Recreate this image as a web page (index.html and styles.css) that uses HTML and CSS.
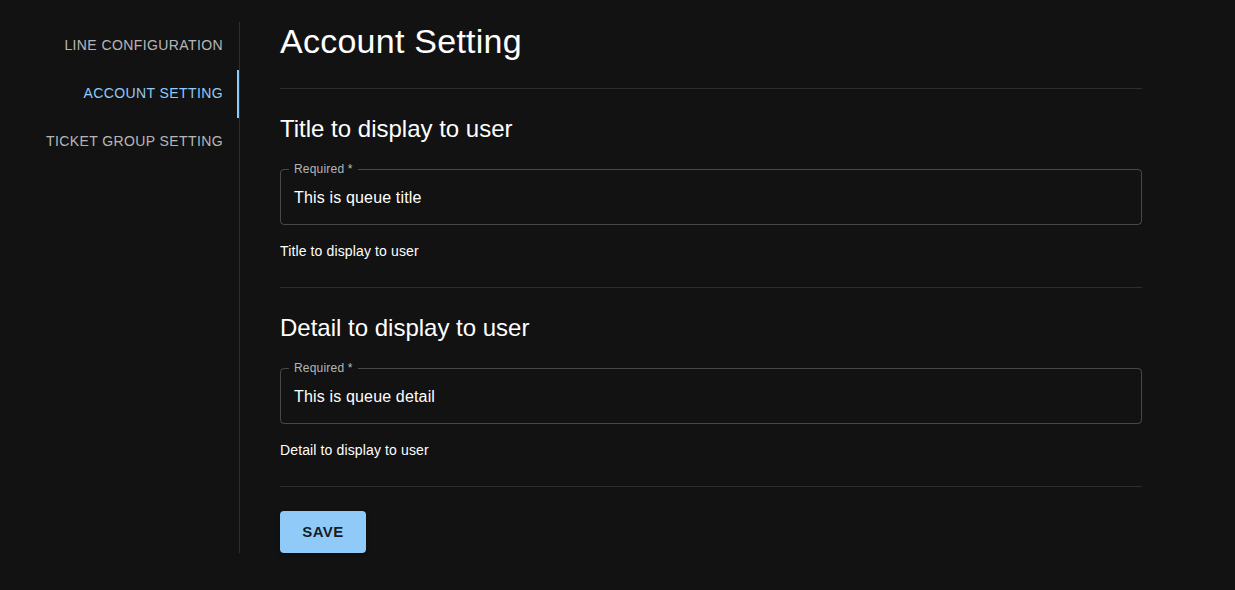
FILE: index.html
```html
<!DOCTYPE html>
<html>
<head>
<meta charset="utf-8">
<link rel="stylesheet" href="styles.css">
</head>
<body>
<div class="page">
  <nav class="tabs">
    <div class="tab">Line Configuration</div>
    <div class="tab tab-active">Account Setting</div>
    <div class="tab">Ticket Group Setting</div>
  </nav>
  <main class="content">
    <h1 class="title">Account Setting</h1>
    <hr class="divider divider-top">
    <section class="section">
      <h2 class="section-title">Title to display to user</h2>
      <div class="field">
        <span class="field-label">Required *</span>
        <span class="field-value">This is queue title</span>
      </div>
      <p class="helper">Title to display to user</p>
    </section>
    <hr class="divider">
    <section class="section">
      <h2 class="section-title">Detail to display to user</h2>
      <div class="field">
        <span class="field-label">Required *</span>
        <span class="field-value">This is queue detail</span>
      </div>
      <p class="helper">Detail to display to user</p>
    </section>
    <hr class="divider">
    <button class="save">Save</button>
  </main>
</div>
</body>
</html>
```

FILE: styles.css
```css
* { box-sizing: border-box; }
html, body {
  margin: 0;
  background: #121212;
  color: #fff;
  font-family: "Liberation Sans", Arial, sans-serif;
}
.page {
  display: flex;
  padding-top: 22px;
  min-height: 590px;
  align-items: flex-start;
}
.tabs {
  width: 240px;
  flex: none;
  border-right: 1px solid rgba(255,255,255,0.12);
  align-self: stretch;
  margin-bottom: 37px;
}
.tab {
  position: relative;
  height: 48px;
  display: flex;
  align-items: center;
  justify-content: flex-end;
  padding-right: 16px;
  padding-bottom: 2px;
  font-size: 14px;
  text-transform: uppercase;
  letter-spacing: 0.4px;
  color: rgba(255,255,255,0.7);
}
.tab-active { color: #90caf9; }
.tab-active::after {
  content: "";
  position: absolute;
  right: 0;
  top: 0;
  bottom: 0;
  width: 2px;
  background: #90caf9;
}
.content {
  width: 862px;
  margin-left: 40px;
  display: flex;
  flex-direction: column;
  align-items: flex-start;
}
.title {
  margin: 0;
  font-size: 34px;
  line-height: 38px;
  font-weight: 400;
  letter-spacing: 0.25px;
}
.divider {
  width: 100%;
  margin: 0;
  border: none;
  height: 1px;
  background: rgba(255,255,255,0.12);
}
.divider-top { margin-top: 28px; }
.section {
  width: 100%;
  padding: 24px 0 26px;
}
.section-title {
  margin: 0;
  font-size: 24px;
  line-height: 32px;
  font-weight: 400;
}
.field {
  position: relative;
  margin-top: 24px;
  height: 56px;
  border: 1px solid rgba(255,255,255,0.23);
  border-radius: 4px;
  display: flex;
  align-items: center;
  padding-left: 13px;
}
.field-label {
  position: absolute;
  left: 8px;
  top: -8px;
  padding: 0 5px;
  background: #121212;
  font-size: 12px;
  line-height: 14px;
  letter-spacing: 0.2px;
  color: rgba(255,255,255,0.7);
}
.field-value {
  font-size: 16px;
  line-height: 23px;
  letter-spacing: 0.16px;
}
.helper {
  margin: 16px 0 0;
  font-size: 14px;
  line-height: 20px;
  letter-spacing: 0.13px;
}
.save {
  margin-top: 24px;
  width: 86px;
  height: 42px;
  padding: 0 0 2px;
  border: none;
  border-radius: 4px;
  background: #90caf9;
  color: rgba(0,0,0,0.87);
  font-family: "Liberation Sans", Arial, sans-serif;
  font-size: 15px;
  font-weight: 700;
  letter-spacing: 0.46px;
  text-transform: uppercase;
  box-shadow: 0 3px 1px -2px rgba(0,0,0,0.2), 0 2px 2px 0 rgba(0,0,0,0.14), 0 1px 5px 0 rgba(0,0,0,0.12);
}
```
